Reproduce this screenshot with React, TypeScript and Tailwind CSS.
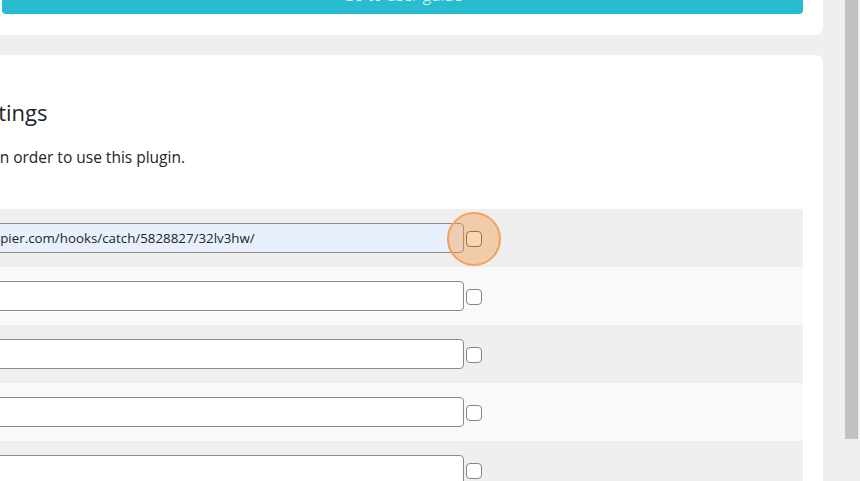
import React from "react";

const rows = [
  { bg: "bg-[#efefef]", value: "https://hooks.zapier.com/hooks/catch/5828827/32lv3hw/", active: true },
  { bg: "bg-[#f9f9f9]", value: "", active: false },
  { bg: "bg-[#efefef]", value: "", active: false },
  { bg: "bg-[#f9f9f9]", value: "", active: false },
  { bg: "bg-[#efefef]", value: "", active: false },
];

export default function App() {
  return (
    <div
      className="flex h-[481px] w-[860px] overflow-hidden bg-[#efefef] text-[#212529]"
      style={{ fontFamily: '"Segoe UI", "Open Sans", sans-serif' }}
    >
      <div className="min-w-0 flex-1 overflow-hidden">
        <div className="ml-[-18px] mr-[20px] mt-[-49px] flex flex-col gap-[20px]">
          <div className="rounded-[8px] bg-white px-[20px] pb-[21px] pt-[25px]">
            <button className="h-[38px] w-full rounded-[4px] bg-[#29bbcf] text-[16px] font-light text-white">
              Go to user guide
            </button>
          </div>
          <div className="rounded-[8px] bg-white px-[20px] pb-[40px] pt-[43px]">
            <div className="ml-[-106px]">
              <h2 className="ml-[-1px] text-[22px] font-medium leading-[28px]">Zapier Settings</h2>
              <p className="mt-[21px] text-[15.5px] leading-[21px]">Set up Zapier in order to use this plugin.</p>
              <div className="mt-[41px] flex flex-col">
                {rows.map((r, i) => (
                  <div key={i} className={`flex h-[58px] items-center ${r.bg}`}>
                    <input
                      type="text"
                      defaultValue={r.value}
                      className={`h-[30px] min-w-0 flex-1 rounded-[4px] border border-[#8a8a8a] px-[3px] text-[13.33px] text-[#212529] outline-none ${r.active ? "bg-[#e8f0fe]" : "bg-white"}`}
                    />
                    <div className="flex w-[339px] items-center">
                      <div className="relative ml-[2px] mt-[2px] flex h-[16px] w-[16px] items-center justify-center">
                        <input
                          type="checkbox"
                          className={`h-[16px] w-[16px] appearance-none rounded-[4px] border bg-white ${r.active ? "border-[#5f5f5f]" : "border-[#858585]"}`}
                        />
                        {r.active && (
                          <div className="pointer-events-none absolute left-1/2 top-1/2 h-[54px] w-[54px] -translate-x-1/2 -translate-y-1/2 rounded-full border-2 border-[#f4a25a] bg-[rgba(244,146,58,0.38)]" />
                        )}
                      </div>
                    </div>
                  </div>
                ))}
              </div>
            </div>
          </div>
        </div>
      </div>
      <div className="flex w-[17px] shrink-0 bg-[#efefef] px-[2px]">
        <div className="h-[439px] w-full bg-[#c1c1c1]" />
      </div>
    </div>
  );
}
